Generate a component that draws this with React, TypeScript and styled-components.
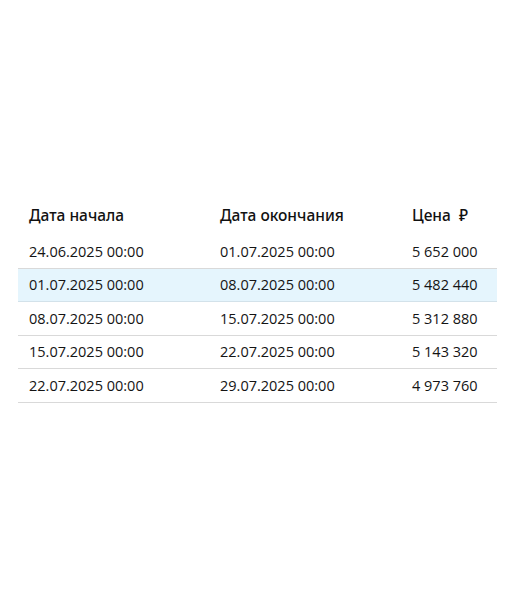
import React from "react";
import styled, { createGlobalStyle } from "styled-components";

const Global = createGlobalStyle`
  html, body { margin: 0; padding: 0; background: #fff; }
  body { font-family: "Open Sans", "Noto Sans", sans-serif; color: #141414; }
`;

const Page = styled.div`
  width: 510px;
  height: 600px;
  padding: 198px 13px 0 18px;
  box-sizing: border-box;
`;

const Table = styled.table`
  width: 479px;
  border-collapse: collapse;
  table-layout: fixed;
`;

const Th = styled.th<{ $w: number }>`
  box-sizing: border-box;
  width: ${(p) => p.$w}px;
  text-align: left;
  font-family: "Noto Sans", "Open Sans", sans-serif;
  font-weight: 500;
  font-size: 15.5px;
  height: 37px;
  padding: 0 0 3px 11px;
  color: #111;
`;

const Tr = styled.tr<{ $active?: boolean }>`
  background: ${(p) => (p.$active ? "#e5f5fd" : "transparent")};
  border-bottom: 1px solid ${(p) => (p.$active ? "#d3e2ea" : "#d9d9d9")};
`;

const Td = styled.td`
  font-size: 14.5px;
  height: 32.5px;
  padding: 0 0 0 11px;
  color: #141414;
`;

const rows = [
  ["24.06.2025 00:00", "01.07.2025 00:00", "5 652 000"],
  ["01.07.2025 00:00", "08.07.2025 00:00", "5 482 440"],
  ["08.07.2025 00:00", "15.07.2025 00:00", "5 312 880"],
  ["15.07.2025 00:00", "22.07.2025 00:00", "5 143 320"],
  ["22.07.2025 00:00", "29.07.2025 00:00", "4 973 760"],
];

export default function App() {
  return (
    <Page>
      <Global />
      <Table>
        <thead>
          <tr>
            <Th $w={191}>Дата начала</Th>
            <Th $w={192}>Дата окончания</Th>
            <Th $w={96}>Цена&nbsp; ₽</Th>
          </tr>
        </thead>
        <tbody>
          {rows.map((r, i) => (
            <Tr key={i} $active={i === 1}>
              {r.map((c, j) => (
                <Td key={j}>{c}</Td>
              ))}
            </Tr>
          ))}
        </tbody>
      </Table>
    </Page>
  );
}
